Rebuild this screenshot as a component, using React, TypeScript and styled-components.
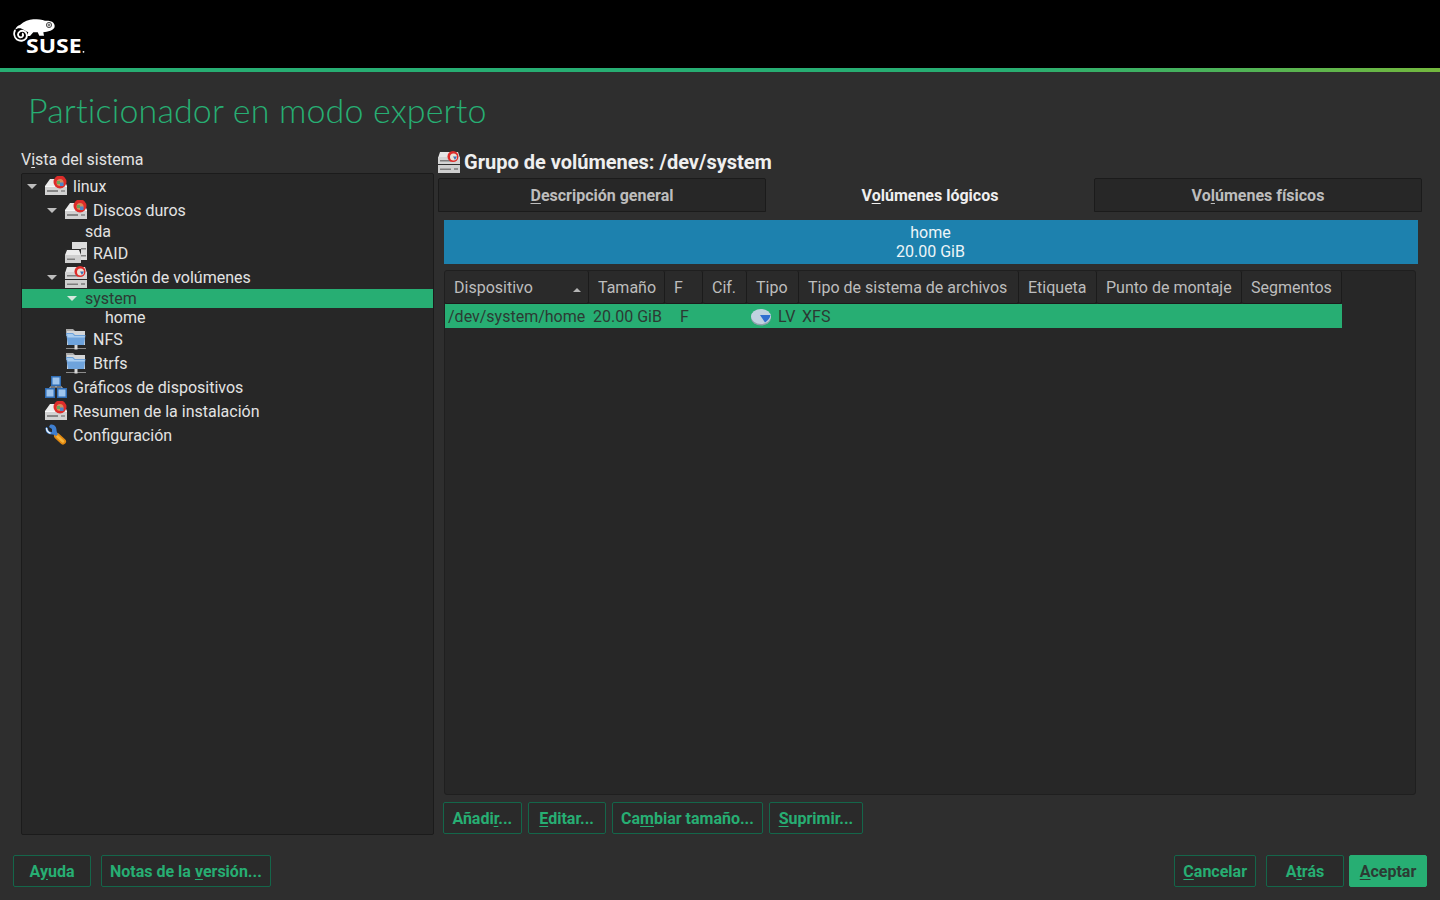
import React from "react";
import styled, { createGlobalStyle } from "styled-components";

const GlobalStyle = createGlobalStyle`
  html, body {
    margin: 0;
    padding: 0;
    height: 100%;
    overflow: hidden;
    background: #2e2e2e;
  }
  * {
    box-sizing: border-box;
  }
`;

const Page = styled.div`
  width: 1440px;
  height: 900px;
  display: flex;
  flex-direction: column;
  background: #2e2e2e;
  color: #e3e3e3;
  font-family: Roboto, "Liberation Sans", sans-serif;
  font-size: 16px;
`;

const TopBar = styled.header`
  height: 72px;
  flex: none;
  background: #000;
  border-bottom: 4px solid;
  border-image: linear-gradient(90deg, #27ae73 0%, #27ae73 70%, #74b83e 100%) 1;
  padding: 18px 0 0 13px;
`;

const Title = styled.h1`
  height: 78px;
  flex: none;
  margin: 0;
  padding: 17px 0 0 28px;
  font-family: Lato, sans-serif;
  font-size: 34px;
  line-height: 42px;
  font-weight: 300;
  letter-spacing: 0.15px;
  color: #27ae73;
`;

const Content = styled.main`
  flex: none;
  height: 685px;
  display: flex;
  gap: 4px;
  padding: 0 18px 0 21px;
`;

const Sidebar = styled.section`
  width: 413px;
  display: flex;
  flex-direction: column;
`;

const SidebarLabel = styled.div`
  height: 23px;
  line-height: 19px;
  color: #e3e3e3;
`;

const TreeBox = styled.div`
  flex: 1;
  background: #272727;
  border: 1px solid #1b1b1b;
  border-radius: 2px;
`;

const TreeRow = styled.div<{ $depth: number; $short?: boolean; $selected?: boolean }>`
  height: ${(p) => (p.$short ? 19 : 24)}px;
  display: flex;
  align-items: center;
  padding-left: ${(p) => p.$depth * 20}px;
  background: ${(p) => (p.$selected ? "#27ae73" : "transparent")};
  color: ${(p) => (p.$selected ? "#2c3a33" : "#e3e3e3")};
`;

const ArrowSlot = styled.span`
  width: 20px;
  flex: none;
  display: flex;
  justify-content: center;
`;

const Arrow = styled.span<{ $selected?: boolean }>`
  width: 0;
  height: 0;
  border-left: 5px solid transparent;
  border-right: 5px solid transparent;
  border-top: 5px solid ${(p) => (p.$selected ? "#d5e8de" : "#bdbdbd")};
`;

const TreeLabel = styled.span`
  display: flex;
  align-items: center;
  gap: 6px;
  padding-left: 3px;
  white-space: nowrap;
`;

const Details = styled.section`
  width: 984px;
  display: flex;
  flex-direction: column;
`;

const Heading = styled.h2`
  height: 28px;
  margin: 0;
  display: flex;
  align-items: center;
  gap: 4px;
  font-size: 20px;
  font-weight: 700;
  color: #efefef;
  padding-bottom: 4px;
`;

const Tabs = styled.div`
  height: 34px;
  flex: none;
  display: flex;
`;

const Tab = styled.div<{ $active?: boolean }>`
  flex: 1;
  display: flex;
  align-items: center;
  justify-content: center;
  font-weight: 700;
  background: ${(p) => (p.$active ? "#2e2e2e" : "#272727")};
  color: ${(p) => (p.$active ? "#efefef" : "#bdbdbd")};
  border: 1px solid ${(p) => (p.$active ? "#2e2e2e" : "#1b1b1b")};
  border-radius: 2px 2px 0 0;
`;

const TabBody = styled.div`
  flex: 1;
  display: flex;
  flex-direction: column;
  padding: 8px 4px 1px 6px;
`;

const VolumeBar = styled.div`
  height: 44px;
  flex: none;
  background: #1d81ae;
  color: #eef5f8;
  text-align: center;
  line-height: 19px;
  padding: 3px 1px 0 0;
`;

const TableBox = styled.div`
  flex: 1;
  margin: 6px 2px 7px 0;
  background: #272727;
  border: 1px solid #1f1f1f;
  border-radius: 3px;
`;

const TableHead = styled.div`
  display: flex;
  height: 33px;
`;

const HeadCell = styled.div<{ $width: number }>`
  position: relative;
  width: ${(p) => p.$width}px;
  flex: none;
  padding-left: 9px;
  line-height: 33px;
  color: #bdbdbd;
  background: #2a2a2a;
  border-right: 1px solid #1b1b1b;
  border-bottom: 1px solid #1b1b1b;
  border-radius: 2px;
  white-space: nowrap;
`;

const SortMark = styled.span`
  position: absolute;
  right: 7px;
  top: 17px;
  width: 0;
  height: 0;
  border-left: 4px solid transparent;
  border-right: 4px solid transparent;
  border-bottom: 4px solid #b4b4b4;
`;

const TableRow = styled.div`
  display: flex;
  height: 24px;
  width: 897px;
  background: #27ae73;
  color: #2c3a33;
  line-height: 24px;
`;

const Cell = styled.div<{ $width: number; $pad: number }>`
  width: ${(p) => p.$width}px;
  flex: none;
  padding-left: ${(p) => p.$pad}px;
  padding-top: 1px;
  display: flex;
  align-items: center;
  gap: 7px;
  white-space: nowrap;
`;

const ActionRow = styled.div<{ $gap: number }>`
  display: flex;
  gap: ${(p) => p.$gap}px;
`;

const Button = styled.button<{ $primary?: boolean }>`
  height: 32px;
  min-width: 78px;
  padding: 0 8px;
  font-family: inherit;
  font-size: 16px;
  font-weight: 700;
  color: ${(p) => (p.$primary ? "#2c3a33" : "#27ae73")};
  background: ${(p) => (p.$primary ? "#27ae73" : "#2a2a2a")};
  border: 1px solid ${(p) => (p.$primary ? "#27ae73" : "#14664a")};
  border-radius: 2px;
  white-space: nowrap;
`;

const ActionBar = styled(ActionRow)`
  margin-left: -1px;
  ${Button} {
    padding: 0 8.4px;
  }
`;

const Footer = styled.footer`
  flex: 1;
  display: flex;
  justify-content: space-between;
  padding: 20px 13px 13px;
`;

const FooterRight = styled.div`
  display: flex;
  gap: 10px;
`;

const Mark = styled.span`
  text-decoration: underline;
  text-underline-offset: 2px;
`;

const DiskIcon = () => (
  <svg width="22" height="20" viewBox="0 0 22 20">
    <path d="M5 3h14l3 7H0z" fill="#ececec" />
    <path d="M0 10h22v9H0z" fill="#d2d2d2" />
    <path d="M0 10h22v1H0z" fill="#f7f7f7" />
    <path d="M2 14h11v2H2z" fill="#868686" />
    <path d="M16 14h4v2h-4z" fill="#9a9a9a" />
    <circle cx="15" cy="6" r="6.500" fill="#dd2c2a" />
    <circle cx="15" cy="6.500" r="3.500" fill="#d98a5a" />
    <path d="M15 6.500h3.500V10H15z" fill="#4c86c9" />
    <path d="M12 5h3v3h-3z" fill="#6aa35a" />
  </svg>
);

const StackedDiskIcon = () => (
  <svg width="22" height="22" viewBox="0 0 22 22">
    <path d="M2 1h18l2 6H0z" fill="#e6e6e6" />
    <path d="M0 6h22v7H0z" fill="#d4d4d4" />
    <path d="M2 9h11v1.500H2z" fill="#7d7d7d" />
    <path d="M0 14h22v8H0z" fill="#cfcfcf" />
    <path d="M2 17.500h11V19H2z" fill="#7d7d7d" />
    <path d="M16 17h4v2h-4z" fill="#8f8f8f" />
    <circle cx="15" cy="5.500" r="5.500" fill="#dd2c2a" />
    <circle cx="15.500" cy="6" r="3.500" fill="#e9e2d6" />
    <path d="M15 5.500h4l-2 3.500z" fill="#3c6fb4" />
  </svg>
);

const RaidIcon = () => (
  <svg width="22" height="22" viewBox="0 0 22 22">
    <path d="M7 0h15v18H7z" fill="#dcdcdc" />
    <path d="M16 6h5v1.500h-5zM16 13h5v1.500h-5z" fill="#808080" />
    <path d="M0 7h16v15H0z" fill="#2a2a2a" />
    <path d="M2 8h12l2 5H0z" fill="#ececec" />
    <path d="M0 13h16v8H0z" fill="#cfcfcf" />
    <path d="M2 16.500h8V18H2z" fill="#7d7d7d" />
  </svg>
);

const NetFolderIcon = () => (
  <svg width="22" height="22" viewBox="0 0 22 22">
    <path d="M1 1h7l2 2h10v5H1z" fill="#a9a9a9" />
    <path d="M2 3h18v14H2z" fill="#d4d6d8" />
    <path d="M1 5h7l2 2h10.500L19 17H3z" fill="#6ea3dc" />
    <path d="M2 6h5.500l2 2H20l-.2 1.500H2.500z" fill="#a9cdf0" />
    <path d="M1 20h20v1H1z" fill="#8c8c8c" />
    <path d="M9.500 17h3v4.500h-3z" fill="#d8d8d8" />
  </svg>
);

const GraphIcon = () => (
  <svg width="22" height="22" viewBox="0 0 22 22">
    <path d="M11 9v2M5 12v-1h12v1" stroke="#b9c6d6" fill="none" />
    <path d="M6 0h10v10H6zM0 12h10v10H0zM12 12h10v10H12z" fill="#2f6db5" />
    <path d="M7.500 1.500h7v7h-7zM1.500 13.500h7v7h-7zM13.500 13.500h7v7h-7z" fill="#9ec4ec" />
  </svg>
);

const WrenchIcon = () => (
  <svg width="22" height="22" viewBox="0 0 22 22">
    <path d="M12 12l6 5.500" stroke="#e28a12" strokeWidth="6" strokeLinecap="round" />
    <path d="M12.500 12.500l5.500 5" stroke="#f7b53c" strokeWidth="2.500" strokeLinecap="round" />
    <path d="M1 3C0 6 1 9 4 10c3 1 5 0 7 2l2-2c-2-2-1-4-2-6.500C10 1 7 0 5 1L4 3l3 2 0 3-3-.5L2 3z" fill="#3f7fd0" />
    <path d="M1.500 4C1.500 6.500 3 8.500 5.500 9.200" stroke="#e6f1fb" strokeWidth="1.500" fill="none" />
  </svg>
);

const PieIcon = () => (
  <svg width="20" height="18" viewBox="0 0 20 18">
    <ellipse cx="10" cy="9.500" rx="10" ry="8" fill="#8fa0ac" />
    <ellipse cx="10" cy="8.500" rx="10" ry="7.500" fill="#c0d2e0" />
    <path d="M9 7h10.500c-.3 3-3 6-5.500 7.500z" fill="#2f6fd0" />
  </svg>
);

const SuseLogo = () => (
  <svg width="74" height="44" viewBox="0 0 74 44">
    <path
      d="M2 12C3 9 5 7.500 7 7 11 3.500 16 1.300 20.300 1.300 25 1.300 29 1.500 32 2.700 35 2.500 39 3 40.300 4.700 42 6.500 42 9 41 10.300 39 12.500 36 13.500 33.700 13.700L30.300 14.300 31 17.700H26.300L24.700 14.300 20.300 14.300 17 18H14L15.300 14.300C14 13.800 12.500 13 11 12 8 9.500 4.500 9.500 2 12z"
      fill="#fff"
    />
    <path
      d="M2.200 12C.500 15 1 19 4 21.500 7 23.500 11 23 13 20.500 14.500 18 14 14.500 11 13.200 8 12 5 14 5 16.500 5 18.500 7 20 9 19 10.500 18 10.500 16 9 15.500"
      fill="none"
      stroke="#fff"
      strokeWidth="1.900"
    />
    <circle cx="36" cy="7" r="2.600" fill="none" stroke="#000" strokeWidth="0.700" />
    <circle cx="36" cy="7" r="1" fill="none" stroke="#000" strokeWidth="0.600" />
    <text
      x="13"
      y="34.500"
      fontFamily="Open Sans, sans-serif"
      fontSize="20"
      fontWeight="700"
      fill="#fff"
      textLength="55.500"
      lengthAdjust="spacingAndGlyphs"
    >
      SUSE
    </text>
    <circle cx="70.500" cy="33.800" r="0.900" fill="#fff" />
  </svg>
);

const columns = [144, 76, 38, 44, 52, 220, 78, 145, 100];
const headers = ["Dispositivo", "Tamaño", "F", "Cif.", "Tipo", "Tipo de sistema de archivos", "Etiqueta", "Punto de montaje", "Segmentos"];

type TreeItem = {
  label: string;
  depth: number;
  open?: boolean;
  selected?: boolean;
  icon?: React.ReactNode;
};

const treeItems: TreeItem[] = [
  { label: "linux", depth: 0, open: true, icon: <DiskIcon /> },
  { label: "Discos duros", depth: 1, open: true, icon: <DiskIcon /> },
  { label: "sda", depth: 2 },
  { label: "RAID", depth: 1, icon: <RaidIcon /> },
  { label: "Gestión de volúmenes", depth: 1, open: true, icon: <StackedDiskIcon /> },
  { label: "system", depth: 2, open: true, selected: true },
  { label: "home", depth: 3 },
  { label: "NFS", depth: 1, icon: <NetFolderIcon /> },
  { label: "Btrfs", depth: 1, icon: <NetFolderIcon /> },
  { label: "Gráficos de dispositivos", depth: 0, icon: <GraphIcon /> },
  { label: "Resumen de la instalación", depth: 0, icon: <DiskIcon /> },
  { label: "Configuración", depth: 0, icon: <WrenchIcon /> },
];

export default function App() {
  return (
    <Page>
      <GlobalStyle />
      <TopBar>
        <SuseLogo />
      </TopBar>
      <Title>Particionador en modo experto</Title>
      <Content>
        <Sidebar>
          <SidebarLabel>
            V<Mark>i</Mark>sta del sistema
          </SidebarLabel>
          <TreeBox>
            {treeItems.map((item) => (
              <TreeRow key={item.label} $depth={item.depth} $short={!item.icon} $selected={item.selected}>
                <ArrowSlot>{item.open && <Arrow $selected={item.selected} />}</ArrowSlot>
                <TreeLabel>
                  {item.icon}
                  {item.label}
                </TreeLabel>
              </TreeRow>
            ))}
          </TreeBox>
        </Sidebar>
        <Details>
          <Heading>
            <StackedDiskIcon />
            Grupo de volúmenes: /dev/system
          </Heading>
          <Tabs>
            <Tab>
              <span>
                <Mark>D</Mark>escripción general
              </span>
            </Tab>
            <Tab $active>
              <span>
                V<Mark>o</Mark>lúmenes lógicos
              </span>
            </Tab>
            <Tab>
              <span>
                Vo<Mark>l</Mark>úmenes físicos
              </span>
            </Tab>
          </Tabs>
          <TabBody>
            <VolumeBar>
              home
              <br />
              20.00 GiB
            </VolumeBar>
            <TableBox>
              <TableHead>
                {headers.map((h, i) => (
                  <HeadCell key={h} $width={columns[i]}>
                    {h}
                    {i === 0 && <SortMark />}
                  </HeadCell>
                ))}
              </TableHead>
              <TableRow>
                <Cell $width={columns[0]} $pad={3}>/dev/system/home</Cell>
                <Cell $width={columns[1]} $pad={4}>20.00 GiB</Cell>
                <Cell $width={columns[2]} $pad={15}>F</Cell>
                <Cell $width={columns[3]} $pad={0} />
                <Cell $width={columns[4]} $pad={4}>
                  <PieIcon />
                  LV
                </Cell>
                <Cell $width={columns[5]} $pad={3}>XFS</Cell>
              </TableRow>
            </TableBox>
            <ActionBar $gap={6}>
              <Button>
                Añadi<Mark>r</Mark>...
              </Button>
              <Button>
                <Mark>E</Mark>ditar...
              </Button>
              <Button>
                Ca<Mark>m</Mark>biar tamaño...
              </Button>
              <Button>
                <Mark>S</Mark>uprimir...
              </Button>
            </ActionBar>
          </TabBody>
        </Details>
      </Content>
      <Footer>
        <ActionRow $gap={10}>
          <Button>
            A<Mark>y</Mark>uda
          </Button>
          <Button>
            Notas de la <Mark>v</Mark>ersión...
          </Button>
        </ActionRow>
        <FooterRight>
          <Button>
            <Mark>C</Mark>ancelar
          </Button>
          <ActionRow $gap={5}>
            <Button>
              A<Mark>t</Mark>rás
            </Button>
            <Button $primary>
              <Mark>A</Mark>ceptar
            </Button>
          </ActionRow>
        </FooterRight>
      </Footer>
    </Page>
  );
}
